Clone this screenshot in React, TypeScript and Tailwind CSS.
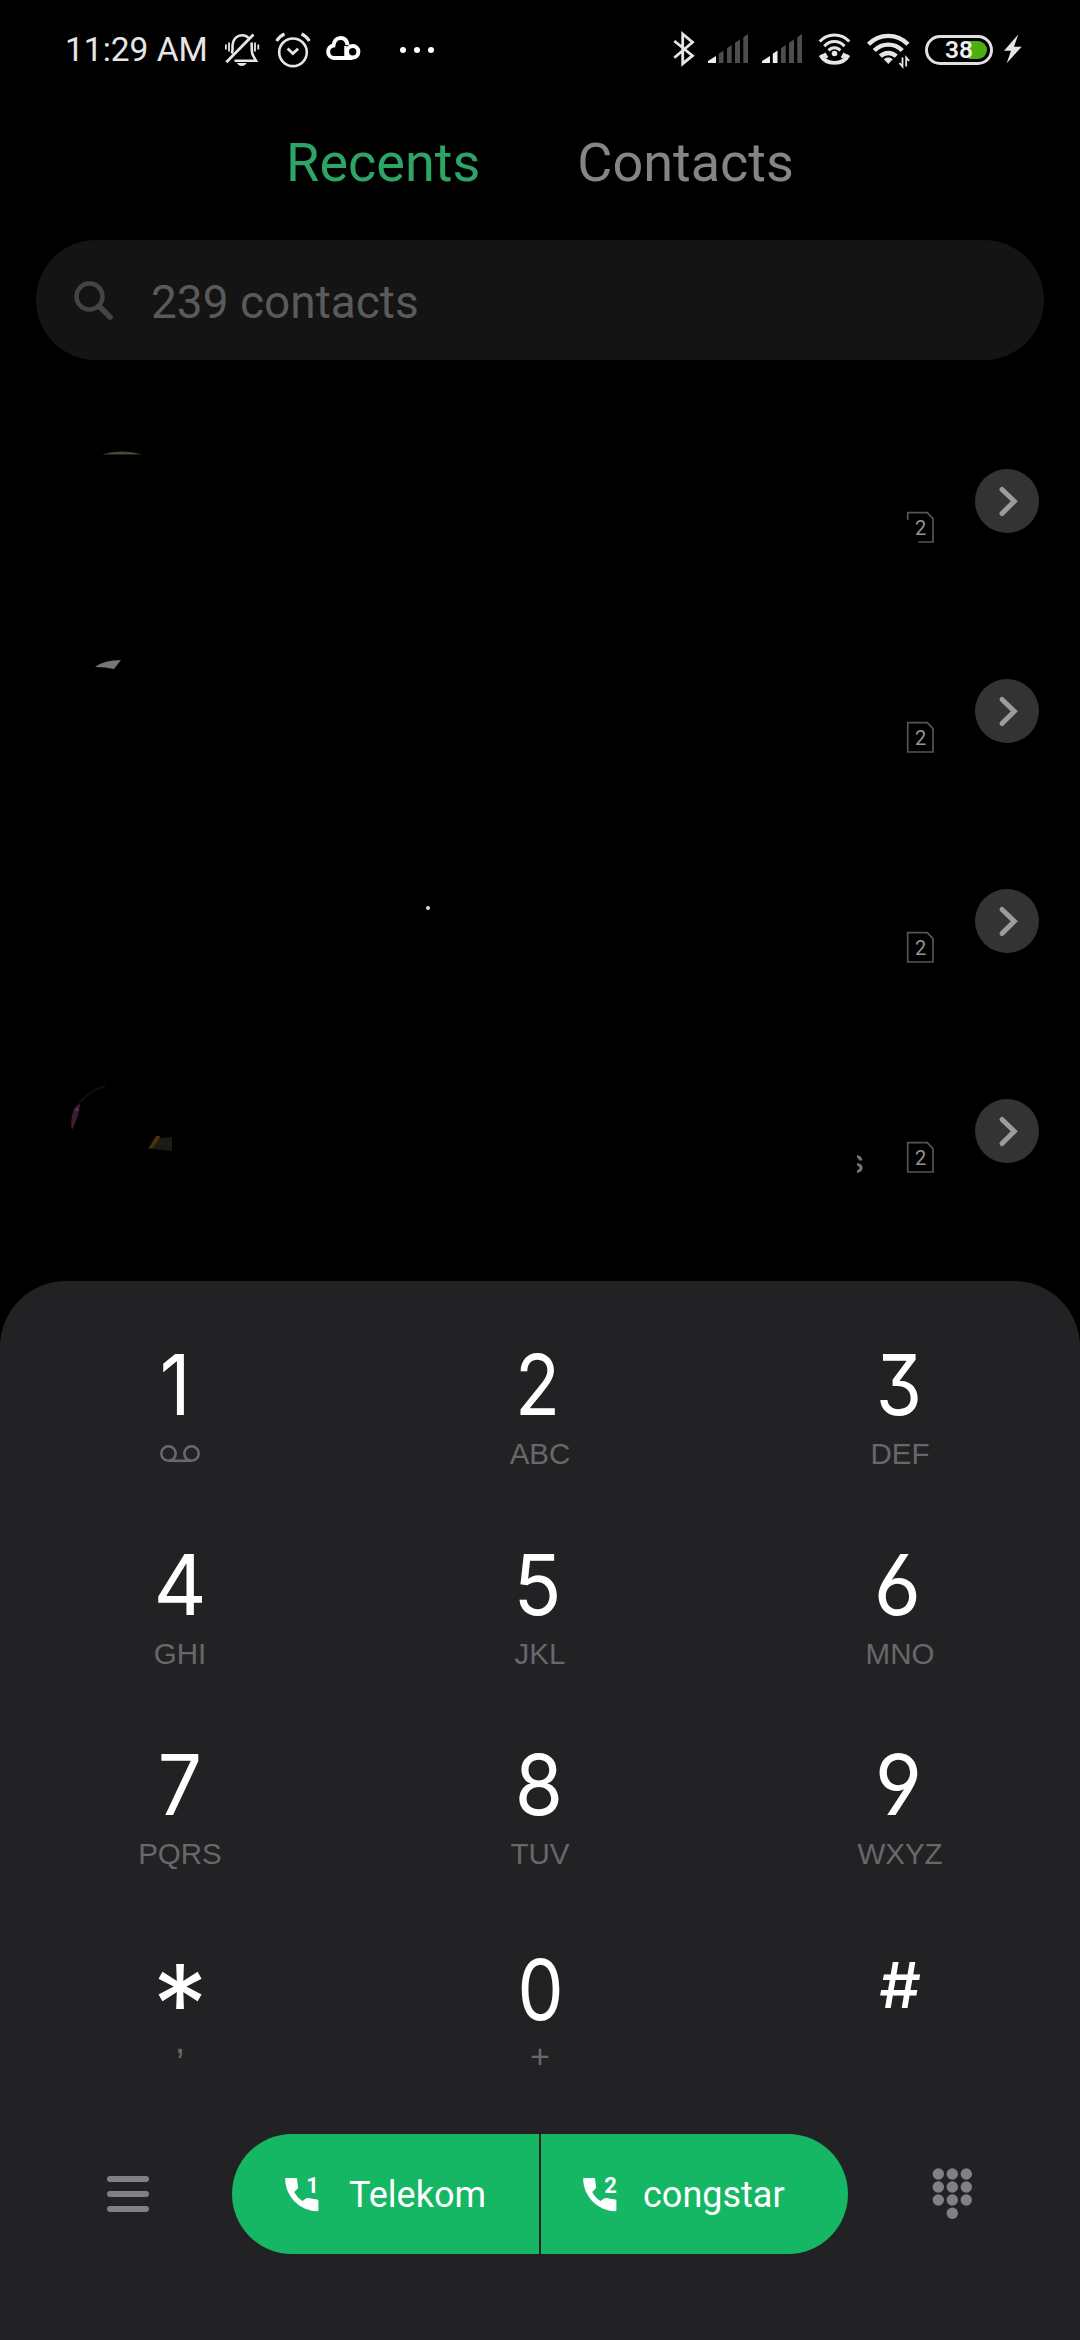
import type { ReactNode } from 'react'

const keys: { digit: string; sub?: string }[] = [
  { digit: '1' },
  { digit: '2', sub: 'ABC' },
  { digit: '3', sub: 'DEF' },
  { digit: '4', sub: 'GHI' },
  { digit: '5', sub: 'JKL' },
  { digit: '6', sub: 'MNO' },
  { digit: '7', sub: 'PQRS' },
  { digit: '8', sub: 'TUV' },
  { digit: '9', sub: 'WXYZ' },
  { digit: '*', sub: ',' },
  { digit: '0', sub: '+' },
  { digit: '#' },
]

// Optical corrections per glyph
const digitStyles: Record<string, string> = {
  '1': 'text-[84px] -translate-x-[5px] scale-x-[0.9]',
  '2': 'text-[84px] -translate-x-[2px] scale-x-[0.88]',
  '3': 'text-[84px] -translate-x-px scale-x-[0.89]',
  '4': 'text-[84px] scale-x-[0.98]',
  '5': 'text-[84px] -translate-x-[2px] scale-x-[0.94]',
  '6': 'text-[84px] -translate-x-[3px] scale-x-[0.97]',
  '7': 'text-[84px] scale-x-[0.93]',
  '8': 'text-[84px] -translate-x-px scale-x-[0.93]',
  '9': 'text-[84px] -translate-x-[2px] scale-x-[0.97]',
  '*': 'text-[110px] translate-y-[19px]',
  '0': 'text-[84px] translate-y-[5px] scale-x-[0.87]',
  '#': 'text-[63px] font-medium scale-x-[1.04]',
}

const subStyles: Record<string, string> = {
  ',': 'text-[38px] -translate-y-[14px]',
  '+': 'text-[34px] translate-y-[2px]',
}

function SignalIcon({ level, className }: { level: number; className?: string }) {
  const bars = [
    '1,33 1,31 9,26 9,33',
    '11.8,33 11.8,23.7 16.5,20.5 16.5,33',
    '20,33 20,18.2 24.7,15 24.7,33',
    '28,33 28,12.8 33,9.4 33,33',
    '36.3,33 36.3,7.2 41,4 41,33',
  ]
  return (
    <svg width="42" height="40" viewBox="0 0 42 40" className={className}>
      {bars.map((points, i) => (
        <polygon key={points} points={points} fill={i < level ? '#f0f0f0' : '#4d4d4d'} />
      ))}
    </svg>
  )
}

function StatusBar() {
  return (
    <div className="flex h-[100px] items-center justify-between pr-[56px] pl-[65px] text-[#e6e6e6]">
      <div className="flex items-center">
        <span className="w-[160px] text-[33.5px] leading-10 whitespace-nowrap">11:29 AM</span>
        {/* Muted bell */}
        <svg width="36" height="40" viewBox="0 0 36 40" fill="none" stroke="currentColor" strokeWidth="2.6">
          <path d="M6.8 23.5c1.2-3 .6-6.5.8-9C8 9 12 5.3 17 5.3c2.8 0 5 1 6.6 2.6M26.5 12.5c.6 4-.3 9 1.2 12.5l3.3 5.7H9.5" />
          <path d="M1.3 32.3L28.5 4.6" strokeWidth="2.8" />
          <path d="M.9 14.5v5M4 12.5v9M30 12.5v9M33.3 14.5v5" strokeWidth="1.8" />
          <path d="M11.8 33h10c-1.3 2-3 3-5 3s-3.700-1-5-3z" fill="currentColor" stroke="none" />
        </svg>
        {/* Alarm */}
        <svg width="36" height="40" viewBox="0 0 36 40" fill="none" stroke="currentColor" strokeWidth="2.6" className="ml-[14px]">
          <circle cx="18" cy="22.3" r="13.8" />
          <path d="M12.6 18.5l5.3 5 5.2-4.8" strokeWidth="2.8" />
          <path d="M1.6 11C3.5 8 6 5.5 9.5 4M26.5 4c3.5 1.5 6 4 7.9 7" strokeWidth="3" />
        </svg>
        {/* Cloud */}
        <svg width="36" height="40" viewBox="0 0 36 40" fill="none" stroke="#fff" strokeWidth="4" className="ml-[14px]">
          <path d="M27.5 28H9a6.3 6.3 0 0 1-.6-12.5C9 10.8 11.8 8 15.5 8c3.8 0 6.5 2.5 7 7" />
          <circle cx="27.7" cy="21.7" r="5.7" />
          <path d="M20.5 16v11" strokeWidth="2.5" />
        </svg>
        <div className="ml-[39px] flex gap-2">
          <span className="size-1.5 rounded-full bg-white" />
          <span className="size-1.5 rounded-full bg-white" />
          <span className="size-1.5 rounded-full bg-white" />
        </div>
      </div>

      <div className="flex items-center">
        {/* Bluetooth */}
        <svg width="24" height="40" viewBox="0 0 24 40" fill="none" stroke="currentColor" strokeWidth="2.8">
          <path d="M2.3 11l18.2 14.7-9.8 8V4l9.8 8.3L2.3 27.7" />
        </svg>
        <SignalIcon level={1} className="ml-[11px]" />
        <SignalIcon level={2} className="ml-3" />
        {/* Wi-Fi calling */}
        <svg width="36" height="40" viewBox="0 0 36 40" fill="none" stroke="currentColor" strokeWidth="3" className="ml-[14px]">
          <path d="M2.7 11.5C10.5 2.8 24.5 2.8 32.3 11.5" />
          <path d="M7.3 16.2c5.5-6.3 14.7-6.3 20.2 0" />
          <path d="M11.6 20.5c3.3-3.7 8.4-3.7 11.7 0" />
          <circle cx="17.5" cy="23.5" r="2.8" fill="currentColor" stroke="none" />
          <path d="M3.5 25C9 35.5 26 35.5 31.5 25" strokeWidth="3.8" />
          <path d="M4.5 26.5l3.5-2 2 3.5M30.5 26.5l-3.5-2-2 3.5" strokeWidth="3" />
        </svg>
        {/* Wi-Fi */}
        <svg width="46" height="40" viewBox="0 0 46 40" fill="none" stroke="currentColor" strokeWidth="4.4" className="ml-[13px]">
          <path d="M2.5 14.3C13.5 3 31 3 42 14.3" />
          <path d="M8.3 20.5c8-7.8 20-7.8 28 0" />
          <path d="M14.3 26.2c4.7-4.3 11.3-4.3 16 0" />
          <path d="M22.3 34l-4.500-4.800c2.500-2.300 6.500-2.300 9 0z" fill="currentColor" stroke="none" />
          <path d="M36.5 27.5v9l-3-3.5M40.2 36.5v-9l3 3.5" strokeWidth="1.8" />
        </svg>
        {/* Battery */}
        <div className="relative ml-[13px] flex h-[30px] w-[68px] items-center justify-center rounded-full border-[3px] border-[#e0e0e0]">
          <span className="absolute top-[3px] right-[3px] h-[18px] w-[18px] rounded-r-full bg-[#4bb00f]" />
          <span className="relative text-[24.5px] leading-6 font-semibold text-[#eeeeee]">38</span>
        </div>
        <svg width="22" height="40" viewBox="0 0 22 40" fill="currentColor" className="ml-[9px]">
          <polygon points="16.3,4.3 2,20.7 9,20.7 4.7,33.3 19.7,16.7 12,16.7" />
        </svg>
      </div>
    </div>
  )
}

function SimBadge({ clipped }: { clipped?: boolean }) {
  return (
    <svg width="28" height="32" viewBox="0 0 28 32" className="mt-[52px] mr-[41px]">
      <path
        d={clipped ? 'M1.7 9V1.7H21.3L27 7.7V31H12.5' : 'M1.7 31V1.7H21.3L27 7.7V31Z'}
        fill="none"
        stroke="#555"
        strokeWidth="1.7"
      />
      <text x="14.7" y="23.7" textAnchor="middle" fontSize="20" fill="#959595">
        2
      </text>
    </svg>
  )
}

function RecentRow({ clipped, children }: { clipped?: boolean; children?: ReactNode }) {
  return (
    <div className="relative flex h-[210px] items-center justify-end pr-[41px]">
      {children}
      <SimBadge clipped={clipped} />
      <button className="flex size-16 items-center justify-center rounded-full bg-[#333333]">
        <svg width="64" height="64" viewBox="0 0 64 64" fill="none" stroke="#9c9c9c" strokeWidth="5" strokeLinecap="round">
          <path d="M27 20.5l12.3 11.8L27 44.5" />
        </svg>
      </button>
    </div>
  )
}

function Voicemail() {
  return (
    <svg width="40" height="30" viewBox="0 0 40 30" fill="none" stroke="#68686a" strokeWidth="2.6">
      <circle cx="8.5" cy="14.5" r="7.2" />
      <circle cx="31.5" cy="14.5" r="7.2" />
      <path d="M8.5 21.8h23" />
    </svg>
  )
}

function Key({ digit, sub }: { digit: string; sub?: string }) {
  return (
    <button className="flex h-[200px] flex-col items-center gap-3">
      <span
        className={`h-[84px] font-['Inter'] leading-[84px] text-white [font-feature-settings:'cv03','cv04','cv09'] ${digitStyles[digit]}`}
      >
        {digit}
      </span>
      {digit === '1' && <Voicemail />}
      {sub && (
        <span
          className={`font-['Liberation_Sans',sans-serif] leading-[30px] text-[#68686a] ${subStyles[sub] ?? 'text-[29.5px]'}`}
        >
          {sub}
        </span>
      )}
    </button>
  )
}

function CallButton({ sim, label, className }: { sim: string; label: string; className: string }) {
  return (
    <button className={`flex items-center bg-[#15b664] text-white ${className}`}>
      <svg width="36" height="40" viewBox="0 0 36 40">
        <path
          d="M1 4h9.5c1 0 1.5.5 1.6 1.3l.9 7.5c.1.9-.1 1.5-.7 2.1L9.2 18c2.3 4 4.8 6.8 8.3 9l3.2-2.3c.7-.5 1.4-.7 2.2-.6l9.2 1.4c.9.2 1.3.8 1.3 1.6V36c0 .8-.5 1.2-1.3 1.2C14.5 37 .5 22 .2 5.5.2 4.5.5 4 1 4z"
          fill="currentColor"
        />
        <text x="27.5" y="18.5" textAnchor="middle" fontSize="22" fontWeight="700" fill="currentColor">
          {sim}
        </text>
      </svg>
      <span className="pt-0.5 text-[36px] leading-10">{label}</span>
    </button>
  )
}

export default function App() {
  return (
    <div className="flex h-[2340px] w-[1080px] flex-col overflow-hidden bg-black font-['Roboto',sans-serif]">
      <StatusBar />

      {/* Tabs */}
      <div className="flex h-[140px] justify-center gap-[97px] pt-[31px] text-[54px] leading-[64px]">
        <span className="text-[#2ca566]">Recents</span>
        <span className="text-[#858585]">Contacts</span>
      </div>

      {/* Search */}
      <div className="mx-9 flex h-[120px] items-center rounded-full bg-[#141414] pl-[37px]">
        <svg width="42" height="42" viewBox="0 0 42 42" fill="none" stroke="#444" strokeWidth="4.5" strokeLinecap="round">
          <circle cx="16.5" cy="17.5" r="13" />
          <path d="M26 27l11 11" strokeWidth="5.5" />
        </svg>
        <span className="ml-9 pt-1 text-[46px] leading-[60px] text-[#5a5a5a]">239 contacts</span>
      </div>

      {/* Recent calls */}
      <div className="mt-9 flex flex-col">
        <RecentRow clipped>
          <svg width="44" height="5" viewBox="0 0 44 5" className="absolute top-[54px] left-[100px]">
            <path d="M2 4.5Q22-1.5 42 4.5z" fill="#4a4a2e" />
          </svg>
        </RecentRow>
        <RecentRow>
          <svg width="28" height="12" viewBox="0 0 28 12" className="absolute top-[53px] left-[94px]">
            <path d="M1 8Q10 1 27 1L20 10Q12 8 1 8z" fill="#767676" />
          </svg>
        </RecentRow>
        <RecentRow>
          <span className="absolute top-[90px] left-[426px] size-1 rounded-full bg-[#e0e0e0]" />
        </RecentRow>
        <RecentRow>
          <svg width="110" height="80" viewBox="0 0 110 80" className="absolute top-[50px] left-[65px]">
            <path d="M8 36q3-8 7-8-1 12-8 26-2-8 1-18z" fill="#3c1f28" />
            <circle cx="12" cy="33.5" r="1.6" fill="#4b2aa8" />
            <path d="M14 27Q26 14 40 10" stroke="#120c1a" strokeWidth="2" fill="none" />
            <path d="M83 73l8-13h4l-2 11z" fill="#4a3010" />
            <path d="M95 62l12-1v14l-20-2z" fill="#1c1a14" />
          </svg>
          <span className="absolute top-[118px] left-[857px] flex h-[34px] w-[7px] justify-end overflow-hidden text-[34px] leading-[34px] text-[#777]">
            s
          </span>
        </RecentRow>
      </div>

      {/* Dial pad */}
      <div className="mt-[45px] flex grow flex-col rounded-t-[66px] bg-[#222224] pt-[62px]">
        <div className="grid grid-cols-3">
          {keys.map((key) => (
            <Key key={key.digit} {...key} />
          ))}
        </div>

        <div className="-mt-[9px] flex h-[120px] items-center">
          <button className="ml-[107px] flex w-[42px] flex-col gap-[9px]">
            <span className="h-1.5 rounded-full bg-[#818183]" />
            <span className="h-1.5 rounded-full bg-[#818183]" />
            <span className="h-1.5 rounded-full bg-[#818183]" />
          </button>
          <div className="ml-[83px] flex h-[120px] w-[616px] gap-0.5">
            <CallButton sim="1" label="Telekom" className="w-[307px] gap-7 rounded-l-full pl-[53px]" />
            <CallButton sim="2" label="congstar" className="w-[307px] gap-6 rounded-r-full pl-[42px]" />
          </div>
          <svg width="42" height="54" viewBox="0 0 42 54" fill="#818183" className="ml-[83px]">
            {[7, 20, 33].map((y) => [7.3, 21.3, 35.3].map((x) => <circle key={`${x}-${y}`} cx={x} cy={y} r="5.7" />))}
            <circle cx="21.3" cy="46.2" r="5.7" />
          </svg>
        </div>
      </div>
    </div>
  )
}
